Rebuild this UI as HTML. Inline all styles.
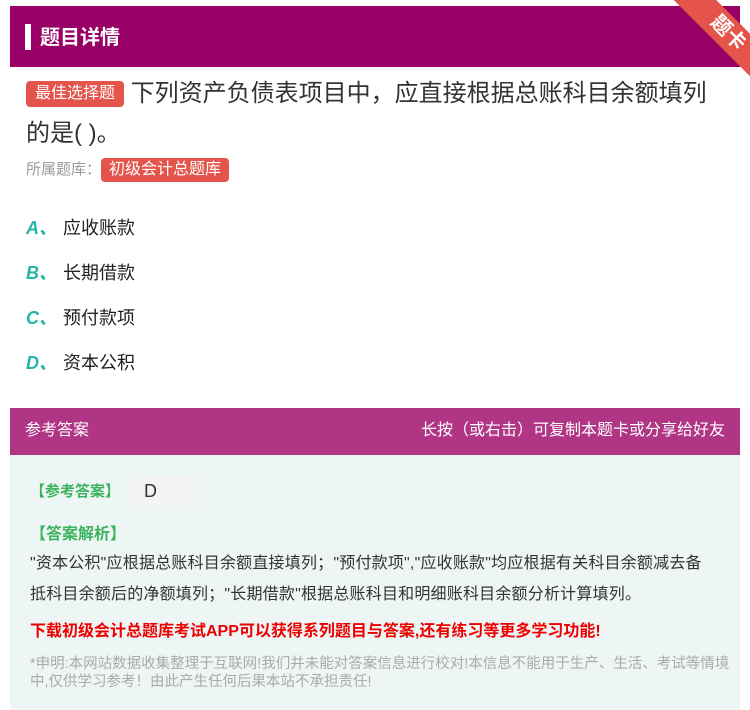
<!DOCTYPE html>
<html><head><meta charset="utf-8"><style>
body{margin:0;width:750px;height:710px;background:#fff;font-family:"Liberation Sans","Noto Sans CJK SC",sans-serif;position:relative;overflow:hidden}
.abs{position:absolute}
.hdr{left:10px;top:6px;width:730px;height:61px;background:#990066}
.bar{left:25px;top:24px;width:6px;height:26px;background:#fff}
.tag{background:#e4544a;color:#fff;border-radius:4px;font-size:16px;display:inline-block}
.opt{left:26px;font-size:18px;color:#222}
.opt b{color:#26b5a5;font-style:italic;margin-right:6px;font-size:18px}
</style></head><body>
<div class="abs hdr"></div>
<div class="abs bar"></div>
<div class="abs" style="left:40px;top:21px;color:#fff;font-size:20px;font-weight:bold">题目详情</div>
<div class="abs" style="left:650px;top:0;width:100px;height:90px;overflow:hidden">
 <div style="position:absolute;left:8px;top:18px;width:140px;height:30px;background:#e4544a;transform:rotate(45deg);color:#fff;font-size:20px;font-weight:bold;text-align:center;line-height:30px">题卡</div>
</div>
<div class="abs" style="left:26px;top:74px;width:700px;font-size:24px;line-height:40px;color:#333"><span class="tag" style="padding:0 9px;line-height:26px;vertical-align:3px">最佳选择题</span> 下列资产负债表项目中，应直接根据总账科目余额填列的是( )。</div>
<div class="abs" style="left:26px;top:158px;font-size:15px;color:#999">所属题库：<span class="tag" style="padding:0 8px;line-height:24px">初级会计总题库</span></div>
<div class="abs opt" style="top:214px"><b>A、</b>应收账款</div>
<div class="abs opt" style="top:259px"><b>B、</b>长期借款</div>
<div class="abs opt" style="top:304px"><b>C、</b>预付款项</div>
<div class="abs opt" style="top:349px"><b>D、</b>资本公积</div>
<div class="abs" style="left:10px;top:408px;width:730px;height:47px;background:#b03585;color:#fff;font-size:16px;line-height:45px">
 <span style="margin-left:15px">参考答案</span><span style="float:right;margin-right:15px">长按（或右击）可复制本题卡或分享给好友</span></div>
<div class="abs" style="left:10px;top:455px;width:730px;height:255px;background:#edf6f4"></div>
<div class="abs" style="left:30px;top:480px;font-size:15px;font-weight:bold;color:#3cb35c">【参考答案】</div>
<div class="abs" style="left:132px;top:476px;width:62px;height:30px;background:#f4f4f4;font-size:18px;line-height:30px;padding-left:12px;box-sizing:border-box;color:#333">D</div>
<div class="abs" style="left:30px;top:520px;font-size:16px;font-weight:bold;color:#3cb35c">【答案解析】</div>
<div class="abs" style="left:30px;top:548px;width:678px;font-size:16px;line-height:31px;color:#333;letter-spacing:0.2px">"资本公积"应根据总账科目余额直接填列；"预付款项","应收账款"均应根据有关科目余额减去备抵科目余额后的净额填列；"长期借款"根据总账科目和明细账科目余额分析计算填列。</div>
<div class="abs" style="left:30px;top:617px;font-size:16px;font-weight:bold;color:#e00">下载初级会计总题库考试APP可以获得系列题目与答案,还有练习等更多学习功能!</div>
<div class="abs" style="left:30px;top:655px;width:720px;font-size:14.5px;line-height:18px;color:#aaa">*申明:本网站数据收集整理于互联网!我们并未能对答案信息进行校对!本信息不能用于生产、生活、考试等情境<br>中,仅供学习参考！由此产生任何后果本站不承担责任!</div>
</body></html>
